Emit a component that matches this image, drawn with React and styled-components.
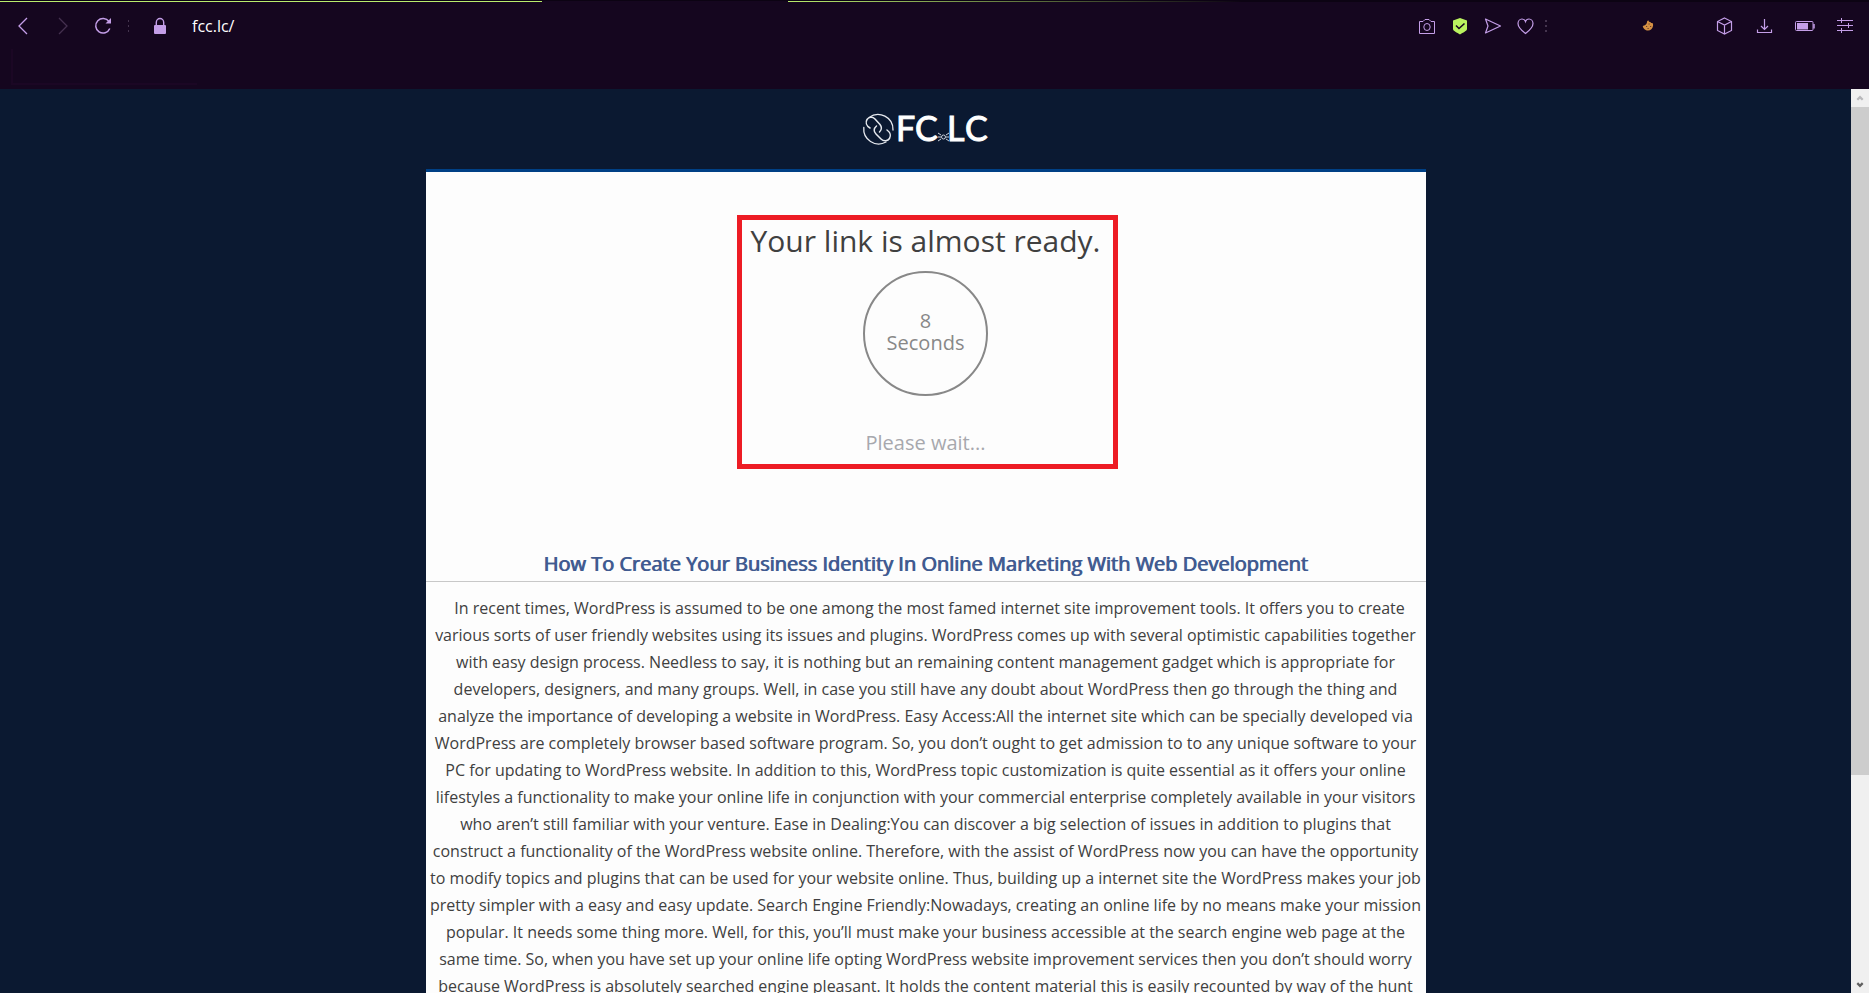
import React from "react";
import styled, { createGlobalStyle } from "styled-components";

const GlobalStyle = createGlobalStyle`
  *, *::before, *::after { box-sizing: border-box; }
  html, body, #root { height: 100%; margin: 0; }
  body {
    background: #0b1931;
    color: #404040;
    font-family: "Open Sans", "Noto Sans", sans-serif;
    overflow: hidden;
  }
`;

const Window = styled.div`
  display: flex;
  flex-direction: column;
  height: 100%;
`;

const Chrome = styled.header`
  flex: none;
  height: 89px;
  background: #15061f;
`;

const TabStrip = styled.div`
  display: flex;
  height: 2px;
  padding-top: 1px;
  background: #0c0313;
`;

const TabEdge = styled.div`
  flex: ${(p) => (p.$fade ? "1" : "0 0 29%")};
  background: ${(p) => (p.$fade ? "linear-gradient(90deg, #b9ec6c, #0c0313 42%)" : "#b9ec6c")};
`;

const ActiveTab = styled.div`
  flex: 0 0 246px;
  background: #15061f;
`;

const Toolbar = styled.nav`
  display: flex;
  align-items: center;
  height: 47px;
  padding: 0 4px 0 3px;
`;

const IconButton = styled.button`
  display: flex;
  align-items: center;
  justify-content: center;
  flex: none;
  width: ${(p) => p.$width || 40}px;
  height: 32px;
  padding: 0;
  border: 0;
  background: none;
  color: ${(p) => (p.disabled ? "#44304f" : "#c49ee8")};
`;

const Glyph = styled.svg`
  display: block;
  width: 20px;
  height: 20px;
  fill: none;
  stroke: currentColor;
`;

const Separator = styled.span`
  flex: none;
  width: ${(p) => p.$size}px;
  height: 12px;
  margin: 0 ${(p) => p.$gap}px;
  background: repeating-linear-gradient(#44344e 0 2px, transparent 2px 5px);
`;

const Address = styled.input`
  flex: 1;
  min-width: 0;
  padding: 0 0 0 6px;
  border: 0;
  outline: 0;
  background: none;
  color: #fff;
  font: 16px/24px "Open Sans", "Noto Sans", sans-serif;
`;

const Extension = styled.div`
  display: flex;
  margin: 0 47px 0 88px;
`;

const BookmarkBar = styled.div`
  width: 186px;
  height: 36px;
  margin-left: 11px;
  border: solid #1b0724;
  border-width: 0 0 2px 2px;
`;

const Viewport = styled.div`
  display: flex;
  flex: 1;
  min-height: 0;
`;

const Page = styled.div`
  flex: 1;
  min-width: 0;
  overflow: hidden;
  background: #0b1931;
`;

const SiteHeader = styled.div`
  display: flex;
  align-items: center;
  justify-content: center;
  height: 80px;
`;

const LogoLink = styled.a`
  display: block;
  color: #fff;
`;

const Logo = styled.svg`
  display: block;
  width: 126px;
  height: 32px;
  overflow: visible;
`;

const Card = styled.main`
  max-width: 1000px;
  margin: 0 auto;
  border-top: 3px solid #004085;
  background: #fdfdfd;
  text-align: center;
`;

const Countdown = styled.section`
  position: relative;
  display: flex;
  flex-direction: column;
  align-items: center;
  width: 381px;
  height: 254px;
  margin: 0 auto;
`;

const Highlight = styled.div`
  position: absolute;
  inset: 0 -2px 0 2px;
  border: 5px solid #ed1c24;
  pointer-events: none;
`;

const Intro = styled.div`
  padding: 43px 0 81px;
`;

const Heading = styled.h1`
  margin: 5px 0 10px;
  font-size: 30px;
  line-height: 41px;
  font-weight: 400;
  white-space: nowrap;
`;

const Timer = styled.div`
  display: flex;
  flex-direction: column;
  justify-content: center;
  width: 125px;
  height: 125px;
  padding-bottom: 4px;
  border: 2px solid #888;
  border-radius: 50%;
  color: #888;
  font-size: 20px;
  line-height: 22px;
`;

const Wait = styled.p`
  margin: 33px 0 0;
  color: #a7a8ad;
  font-size: 20px;
  line-height: 28px;
`;

const ArticleTitle = styled.h2`
  margin: 0;
  padding-bottom: 3px;
  border-bottom: 1px solid #c8c8c8;
  color: #405a90;
  font-size: 20px;
  line-height: 28px;
  font-weight: 400;
  text-shadow: 1px 0 0 #405a90;
`;

const ArticleText = styled.p`
  margin: 0;
  padding: 13px 2px 0;
  font-size: 16px;
  line-height: 27px;
  text-indent: 8px;
`;

const Scrollbar = styled.div`
  display: flex;
  flex-direction: column;
  flex: none;
  width: 18px;
  background: #f0f0f0;
`;

const ScrollTrack = styled.div`
  flex: 1;
`;

const ScrollThumb = styled.div`
  height: 77%;
  background: #cdcdcd;
`;

const ScrollButton = styled.button`
  display: flex;
  align-items: center;
  justify-content: center;
  height: 18px;
  padding: 0;
  border: 0;
  background: none;
  color: ${(p) => p.$color};
`;

const article =
  "In recent times, WordPress is assumed to be one among the most famed internet site improvement tools. It offers you to create various sorts of user friendly websites using its issues and plugins. WordPress comes up with several optimistic capabilities together with easy design process. Needless to say, it is nothing but an remaining content management gadget which is appropriate for developers, designers, and many groups. Well, in case you still have any doubt about WordPress then go through the thing and analyze the importance of developing a website in WordPress. Easy Access:All the internet site which can be specially developed via WordPress are completely browser based software program. So, you don’t ought to get admission to to any unique software to your PC for updating to WordPress website. In addition to this, WordPress topic customization is quite essential as it offers your online lifestyles a functionality to make your online life in conjunction with your commercial enterprise completely available in your visitors who aren’t still familiar with your venture. Ease in Dealing:You can discover a big selection of issues in addition to plugins that construct a functionality of the WordPress website online. Therefore, with the assist of WordPress now you can have the opportunity to modify topics and plugins that can be used for your website online. Thus, building up a internet site the WordPress makes your job pretty simpler with a easy and easy update. Search Engine Friendly:Nowadays, creating an online life by no means make your mission popular. It needs some thing more. Well, for this, you’ll must make your business accessible at the search engine web page at the same time. So, when you have set up your online life opting WordPress website improvement services then you don’t should worry because WordPress is absolutely searched engine pleasant. It holds the content material this is easily recounted by way of the hunt";

function Tool({ label, width, disabled, children }) {
  return (
    <IconButton type="button" aria-label={label} $width={width} disabled={disabled}>
      <Glyph viewBox="0 0 20 20" aria-hidden="true">
        {children}
      </Glyph>
    </IconButton>
  );
}

function BrowserChrome() {
  return (
    <Chrome>
      <TabStrip>
        <TabEdge />
        <ActiveTab />
        <TabEdge $fade />
      </TabStrip>
      <Toolbar aria-label="Browser">
        <Tool label="Back">
          <path d="M14 2 6 10l8 8" strokeWidth="1.3" />
        </Tool>
        <Tool label="Forward" disabled>
          <path d="m6 2 8 8-8 8" strokeWidth="1.3" />
        </Tool>
        <Tool label="Reload">
          <path d="M16.8 12.5A7.3 7.3 0 1 1 16 5.5" strokeWidth="1.5" />
          <path d="M18 2v5.5h-5.5z" fill="currentColor" stroke="none" />
        </Tool>
        <Separator $size={1} $gap={5} />
        <Tool label="Site information" width={52}>
          <path d="M6.300 10V6.500a3.700 4 0 0 1 7.400 0V10" strokeWidth="1.4" />
          <rect x="4" y="9" width="12" height="9" rx="1" fill="currentColor" stroke="none" />
        </Tool>
        <Address aria-label="Address" defaultValue="fcc.lc/" />
        <Tool label="Snapshot" width={33}>
          <path d="M2.5 5.5H6l2-2h4l2 2h3.5v12h-15z" />
          <ellipse cx="10" cy="11" rx="3.2" ry="3.5" />
        </Tool>
        <Tool label="Ad blocker" width={33}>
          <path d="m10 2 7 2.5v8.5c0 2-4 3.5-7 5.5-3-2-7-3.5-7-5.5V4.5z" fill="#b9f25f" stroke="none" />
          <path d="m6 9.5 3 3 5.5-5" stroke="#15061f" strokeWidth="1.6" />
        </Tool>
        <Tool label="Send to My Flow" width={33}>
          <path d="m2.5 3 15 7-15 7 2.5-7z" strokeWidth="1.2" strokeLinejoin="round" />
        </Tool>
        <Tool label="Add to bookmarks" width={33}>
          <path d="M9.500 17.500C5.500 14.500 2 11.500 2 7.500A4 4.500 0 0 1 6 3c1.500 0 3 1 3.500 2.500C10 4 11.500 3 13 3a4 4.500 0 0 1 4 4.500c0 4-3.500 7-7.500 10z" strokeWidth="1.2" />
        </Tool>
        <Separator $size={2} $gap={3} />
        <Extension>
          <Tool label="Cookie settings" width={20}>
            <path d="M9 6c0-1 .8-1.500 1.500-1.500.2 1 1 1.500 2 1.500 0 .8 1 1.200 2 1 .5.800.8 1.800.500 3-.3 2.700-2.500 4.500-5 4.500s-5-2-5.200-4.500C6.500 9.500 9 8.500 9 6z" fill="#d59043" stroke="none" />
            <path d="M8 10.500h1.200M10.500 8h1.200M12 10.500h1.200M9.500 12.500h1.200" stroke="#6b3f28" strokeWidth="1.2" />
          </Tool>
        </Extension>
        <Tool label="Crypto wallet">
          <path d="m9.500 2 7 3.500v9l-7 3.500-7-3.500v-9zM2.500 5.500l7 3.500 7-3.500M9.500 9v9" strokeWidth="1.2" />
        </Tool>
        <Tool label="Downloads">
          <path d="M9.500 3v10.500M6 10l3.500 3.500L13 10M2.500 13.500v3h14v-3" strokeWidth="1.2" />
        </Tool>
        <Tool label="Battery saver">
          <rect x=".5" y="5.500" width="17.500" height="9" rx="1" />
          <rect x="2" y="7" width="11" height="6.500" fill="currentColor" stroke="none" />
          <path d="M19 8v4.500" strokeWidth="1.500" />
        </Tool>
        <Tool label="Easy setup">
          <path d="M2 4.500h16M2 9.500h16M2 14.500h16M6.500 2v5M13.500 7v5M6.500 12v5" />
        </Tool>
      </Toolbar>
      <BookmarkBar />
    </Chrome>
  );
}

function SiteLogo() {
  return (
    <LogoLink href="#" aria-label="FC.LC">
      <Logo viewBox="0 0 126 32">
        <g fill="none" stroke="#e6e9ef" strokeLinecap="round">
          <path d="M6 4.500A15 15 0 0 1 30 17" strokeWidth="1.3" />
          <path d="M.8 14.500A15 15 0 0 0 23 29" strokeWidth="1.3" />
          <path d="M7 15C3 12.500 2.500 9 4 6.500S9.500 3.500 12 6l5 5.500c2 2.500 2 5-.5 7.500" strokeWidth="1.5" />
          <path d="M24 17c3.500 2.500 4 6 2.500 8.500S21 29 18 26l-5-5c-2.500-2.500-2.500-5.500.5-8" strokeWidth="1.5" />
        </g>
        <g fill="#fff" stroke="#fff" fontFamily="Lato, sans-serif" fontSize="34">
          <text x="33" y="28">F</text>
          <text x="52" y="28">C</text>
          <text x="84" y="28">L</text>
          <text x="102" y="28">C</text>
        </g>
        <g fill="none" stroke="#c8cfda" strokeWidth="1">
          <circle cx="80.500" cy="24" r="2" />
          <path d="m75 20 3 2m-3 2h3m-3 4 3-2m8-6-3 2m3 2h-3m3 4-3-2" />
        </g>
      </Logo>
    </LogoLink>
  );
}

export default function App() {
  return (
    <Window>
      <GlobalStyle />
      <BrowserChrome />
      <Viewport>
        <Page>
          <SiteHeader>
            <SiteLogo />
          </SiteHeader>
          <Card>
            <Intro>
              <Countdown>
                <Highlight />
                <Heading>Your link is almost ready.</Heading>
                <Timer>
                  <span>8</span>
                  <span>Seconds</span>
                </Timer>
                <Wait>Please wait...</Wait>
              </Countdown>
            </Intro>
            <ArticleTitle>
              How To Create Your Business Identity In Online Marketing With Web Development
            </ArticleTitle>
            <ArticleText>{article}</ArticleText>
          </Card>
        </Page>
        <Scrollbar>
          <ScrollButton type="button" aria-label="Scroll up" $color="#b8b8bb">
            <Glyph viewBox="0 0 20 20">
              <path d="m7 12 3-3 3 3" strokeWidth="2.5" />
            </Glyph>
          </ScrollButton>
          <ScrollTrack>
            <ScrollThumb />
          </ScrollTrack>
          <ScrollButton type="button" aria-label="Scroll down" $color="#606060">
            <Glyph viewBox="0 0 20 20">
              <path d="m7 9 3 3 3-3" strokeWidth="2.5" />
            </Glyph>
          </ScrollButton>
        </Scrollbar>
      </Viewport>
    </Window>
  );
}
